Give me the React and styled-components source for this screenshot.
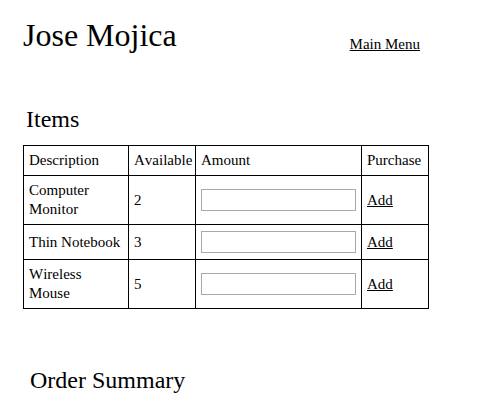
import React from "react";
import styled, { createGlobalStyle } from "styled-components";

const GlobalStyle = createGlobalStyle`
  body {
    margin: 0;
    background: #ffffff;
    color: #000000;
    font-family: 'Times New Roman', 'Liberation Serif', serif;
    font-kerning: none;
    font-variant-ligatures: none;
    text-rendering: optimizeSpeed;
  }
`;

const Page = styled.div`
  width: 478px;
  padding-top: 17px;
`;

const Header = styled.div`
  display: flex;
  justify-content: space-between;
  align-items: flex-start;
  width: 397px;
  margin-left: 23px;
`;

const Title = styled.h1`
  margin: 0;
  font-size: 32px;
  line-height: 36px;
  font-weight: normal;
`;

const MenuLink = styled.a`
  margin-top: 18px;
  font-size: 15px;
  line-height: 18px;
  color: #000000;
  text-decoration: underline;
`;

const SectionTitle = styled.h2`
  margin: ${(props) => props.$top}px 0 0 ${(props) => props.$left}px;
  font-size: 24px;
  line-height: 28px;
  font-weight: normal;
`;

const Table = styled.table`
  margin: 12px 0 0 23px;
  width: 405px;
  border-collapse: collapse;
  table-layout: fixed;
  font-family: inherit;
  font-size: 15px;
  line-height: 19px;
`;

const Cell = styled.td`
  border: 1px solid #000000;
  padding: 5px 5px;
  text-align: left;
  vertical-align: middle;
  font-weight: normal;
`;

const HeadCell = styled(Cell).attrs({ as: "th" })`
  width: ${(props) => props.$w}px;
`;

const AmountInput = styled.input`
  display: block;
  box-sizing: border-box;
  width: 100%;
  height: 22px;
  margin: 1px 0;
  border: 1px solid #a9a9a9;
  background: #ffffff;
  padding: 0 2px;
`;

const AddLink = styled.a`
  color: #000000;
  text-decoration: underline;
`;

const items = [
  { name: ["Computer", "Monitor"], available: 2 },
  { name: ["Thin Notebook"], available: 3 },
  { name: ["Wireless", "Mouse"], available: 5 },
];

export default function App() {
  return (
    <Page>
      <GlobalStyle />
      <Header>
        <Title>Jose Mojica</Title>
        <MenuLink href="#">Main Menu</MenuLink>
      </Header>
      <SectionTitle $top={52} $left={26}>
        Items
      </SectionTitle>
      <Table>
        <thead>
          <tr>
            <HeadCell $w={94}>Description</HeadCell>
            <HeadCell $w={56}>Available</HeadCell>
            <HeadCell $w={155}>Amount</HeadCell>
            <HeadCell $w={56}>Purchase</HeadCell>
          </tr>
        </thead>
        <tbody>
          {items.map((item) => (
            <tr key={item.name.join(" ")}>
              <Cell>
                {item.name.map((line, i) => (
                  <React.Fragment key={line}>
                    {i > 0 && <br />}
                    {line}
                  </React.Fragment>
                ))}
              </Cell>
              <Cell>{item.available}</Cell>
              <Cell>
                <AmountInput type="text" />
              </Cell>
              <Cell>
                <AddLink href="#">Add</AddLink>
              </Cell>
            </tr>
          ))}
        </tbody>
      </Table>
      <SectionTitle $top={57} $left={30}>
        Order Summary
      </SectionTitle>
    </Page>
  );
}
